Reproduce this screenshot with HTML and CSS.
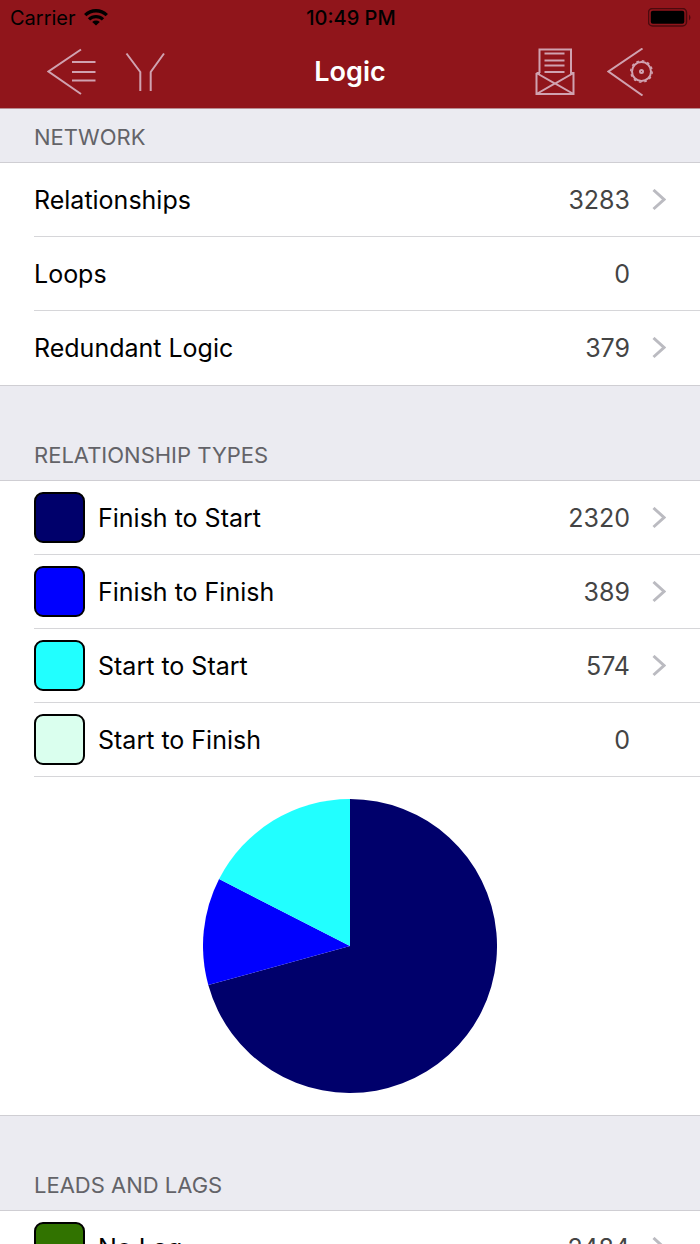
FILE: index.html
```html
<!DOCTYPE html>
<html lang="en">
<head>
<meta charset="utf-8">
<meta name="viewport" content="width=device-width, initial-scale=1">
<title>Logic</title>
<link rel="stylesheet" href="styles.css">
</head>
<body>
<div class="app">
  <header class="header">
    <div class="status">
      <div class="carrier">
        <span>Carrier</span>
        <svg width="24" height="18" viewBox="0 0 24 18" aria-hidden="true">
          <g fill="none" stroke="#000" stroke-width="3.3">
            <path d="M1.2 6.1a15.6 15.6 0 0 1 21.6 0"/>
            <path d="M5 10.400a10.2 10.2 0 0 1 14 0"/>
          </g>
          <path d="M12 16.500l-3.8-3.6a5.6 5.6 0 0 1 7.6 0z"/>
        </svg>
      </div>
      <span class="clock">10:49 PM</span>
      <svg class="battery" width="44" height="20" viewBox="0 0 44 20" aria-hidden="true">
        <rect x="0.500" y="0.500" width="38" height="17.500" rx="4" fill="none" stroke="#4b0a0e" stroke-width="1.500"/>
        <rect x="2.800" y="2.800" width="33.500" height="13" rx="2"/>
        <path d="M41 6.500q3 3 0 6z" fill="#4b0a0e"/>
      </svg>
    </div>
    <nav class="bar">
      <div class="tools">
        <button class="tool" type="button" aria-label="Back to list">
          <svg width="50" height="48" viewBox="0 0 50 48">
            <path d="M34 1.500L1.500 23.500L34 46M25 14h23.500M25 24h23.500M25 32.500h23.500"/>
          </svg>
        </button>
        <button class="tool" type="button" aria-label="Filter">
          <svg width="40" height="48" viewBox="0 0 40 48">
            <path d="M1.500 5.500L15.300 24v19M39 5.500L25.700 24v19"/>
          </svg>
        </button>
      </div>
      <h1 class="title">Logic</h1>
      <div class="tools tools-end">
        <button class="tool" type="button" aria-label="Send report">
          <svg width="40" height="48" viewBox="0 0 40 48">
            <path d="M4.500 25V1.500h31.500V25M1.500 25v21h37V25h-3.500M1.500 25h3.500M1.500 25L20 35.500L38.500 25M1.500 46L20 35.500L38.500 46"/>
            <path d="M9.500 5.500h20M9.500 12.500h20M9.500 17.500h20M9.500 24h20"/>
          </svg>
        </button>
        <button class="tool" type="button" aria-label="Settings">
          <svg width="46" height="48" viewBox="0 0 46 48">
            <path d="M35.500 .5L1.500 23.500L35.500 47.500"/>
            <circle cx="34.500" cy="23.500" r="9.500"/>
            <circle cx="34.500" cy="23.500" r="10.700" stroke-dasharray="2.600 3" stroke-width="1.500"/>
            <circle cx="34.500" cy="23.500" r="1.500"/>
          </svg>
        </button>
      </div>
    </nav>
  </header>

  <main class="content">
    <section>
      <h2 class="heading heading-first">NETWORK</h2>
      <ul class="group">
        <li class="item"><a class="row" href="#relationships"><span class="label">Relationships</span><span class="value">3283</span><svg class="chevron" viewBox="0 0 14 22"><path d="M1.500 1L12 10.500L1.500 20"/></svg></a></li>
        <li class="item"><div class="row"><span class="label">Loops</span><span class="value">0</span><span class="chevron"></span></div></li>
        <li class="item"><a class="row" href="#redundant"><span class="label">Redundant Logic</span><span class="value">379</span><svg class="chevron" viewBox="0 0 14 22"><path d="M1.500 1L12 10.500L1.500 20"/></svg></a></li>
      </ul>
    </section>

    <section>
      <h2 class="heading">RELATIONSHIP TYPES</h2>
      <ul class="group">
        <li class="item"><a class="row" href="#fs"><span class="swatch navy"></span><span class="label">Finish to Start</span><span class="value">2320</span><svg class="chevron" viewBox="0 0 14 22"><path d="M1.500 1L12 10.500L1.500 20"/></svg></a></li>
        <li class="item"><a class="row" href="#ff"><span class="swatch blue"></span><span class="label">Finish to Finish</span><span class="value">389</span><svg class="chevron" viewBox="0 0 14 22"><path d="M1.500 1L12 10.500L1.500 20"/></svg></a></li>
        <li class="item"><a class="row" href="#ss"><span class="swatch cyan"></span><span class="label">Start to Start</span><span class="value">574</span><svg class="chevron" viewBox="0 0 14 22"><path d="M1.500 1L12 10.500L1.500 20"/></svg></a></li>
        <li class="item"><div class="row"><span class="swatch mint"></span><span class="label">Start to Finish</span><span class="value">0</span><span class="chevron"></span></div></li>
        <li class="chart">
          <svg class="pie" viewBox="-147 -147 294 294" role="img" aria-label="Relationship types by count">
            <path d="M0 0V-147A147 147 0 1 1 -141.700 39.100Z" fill="#00006b"/>
            <path d="M0 0L-141.700 39.100A147 147 0 0 1 -130.900 -66.900Z" fill="#0000ff"/>
            <path d="M0 0L-130.900 -66.900A147 147 0 0 1 0 -147Z" fill="#21ffff"/>
          </svg>
        </li>
      </ul>
    </section>

    <section>
      <h2 class="heading">LEADS AND LAGS</h2>
      <ul class="group">
        <li class="item"><a class="row" href="#nolag"><span class="swatch green"></span><span class="label">No Lag</span><span class="value">2484</span><svg class="chevron" viewBox="0 0 14 22"><path d="M1.500 1L12 10.500L1.500 20"/></svg></a></li>
      </ul>
    </section>
  </main>
</div>
</body>
</html>
```
FILE: styles.css
```css
* {
  box-sizing: border-box;
}

body {
  margin: 0;
  font-family: Inter, "Liberation Sans", sans-serif;
  font-size: 25px;
  color: #000;
  background: #ebebf1;
}

.app {
  display: flex;
  flex-direction: column;
  height: 100vh;
}

.header {
  flex: none;
  background: #90151b;
  border-bottom: 1px solid #b98c92;
}

.status {
  display: grid;
  grid-template-columns: 1fr auto 1fr;
  align-items: center;
  height: 36px;
  padding: 0 8px 0 10px;
  font-size: 20px;
}

.carrier {
  display: flex;
  align-items: center;
  gap: 8px;
}

.clock {
  font-weight: 500;
}

.battery {
  justify-self: end;
}

.bar {
  display: grid;
  grid-template-columns: 1fr auto 1fr;
  align-items: center;
  height: 72px;
  padding: 0 47px 0 47px;
}

.tools {
  display: flex;
  gap: 28px;
}

.tools-end {
  justify-content: flex-end;
  gap: 32px;
}

.tool {
  display: block;
  padding: 0;
  border: 0;
  background: none;
  cursor: pointer;
}

.tool svg {
  display: block;
  fill: none;
  stroke: #d0a2b0;
  stroke-width: 2;
}

.title {
  margin: 0;
  font-size: 27px;
  font-weight: 600;
  line-height: 32px;
  color: #fff;
}

.content {
  flex: 1;
  min-height: 0;
  overflow-y: auto;
  scrollbar-width: none;
}

.heading {
  display: flex;
  align-items: flex-end;
  height: 94px;
  margin: 0;
  padding: 0 34px 11px;
  font-size: 22px;
  font-weight: 400;
  line-height: 28px;
  color: #636368;
}

.heading-first {
  height: 53px;
}

.group {
  margin: 0;
  padding: 0;
  list-style: none;
  background: #fff;
  border-top: 1px solid #cfced3;
  border-bottom: 1px solid #cfced3;
}

.item {
  padding-left: 34px;
}

.row {
  display: flex;
  align-items: center;
  height: 74px;
  padding-right: 34px;
  border-bottom: 1px solid #d6d6d9;
  color: inherit;
  text-decoration: none;
}

.group .item:last-child .row {
  border-bottom-color: transparent;
}

.label {
  flex: 1;
}

.value {
  color: #444;
}

.chevron {
  width: 14px;
  height: 22px;
  margin-left: 22px;
  fill: none;
  stroke: #bbbbc1;
  stroke-width: 3;
}

.swatch {
  width: 51px;
  height: 51px;
  margin-right: 13px;
  border: 2px solid #000;
  border-radius: 9px;
}

.navy {
  background: #00006b;
}

.blue {
  background: #0000ff;
}

.cyan {
  background: #21ffff;
}

.mint {
  background: #daffee;
}

.green {
  background: #317300;
}

.chart {
  display: flex;
  justify-content: center;
  padding: 22px;
}

.pie {
  width: 294px;
  height: 294px;
}
```
